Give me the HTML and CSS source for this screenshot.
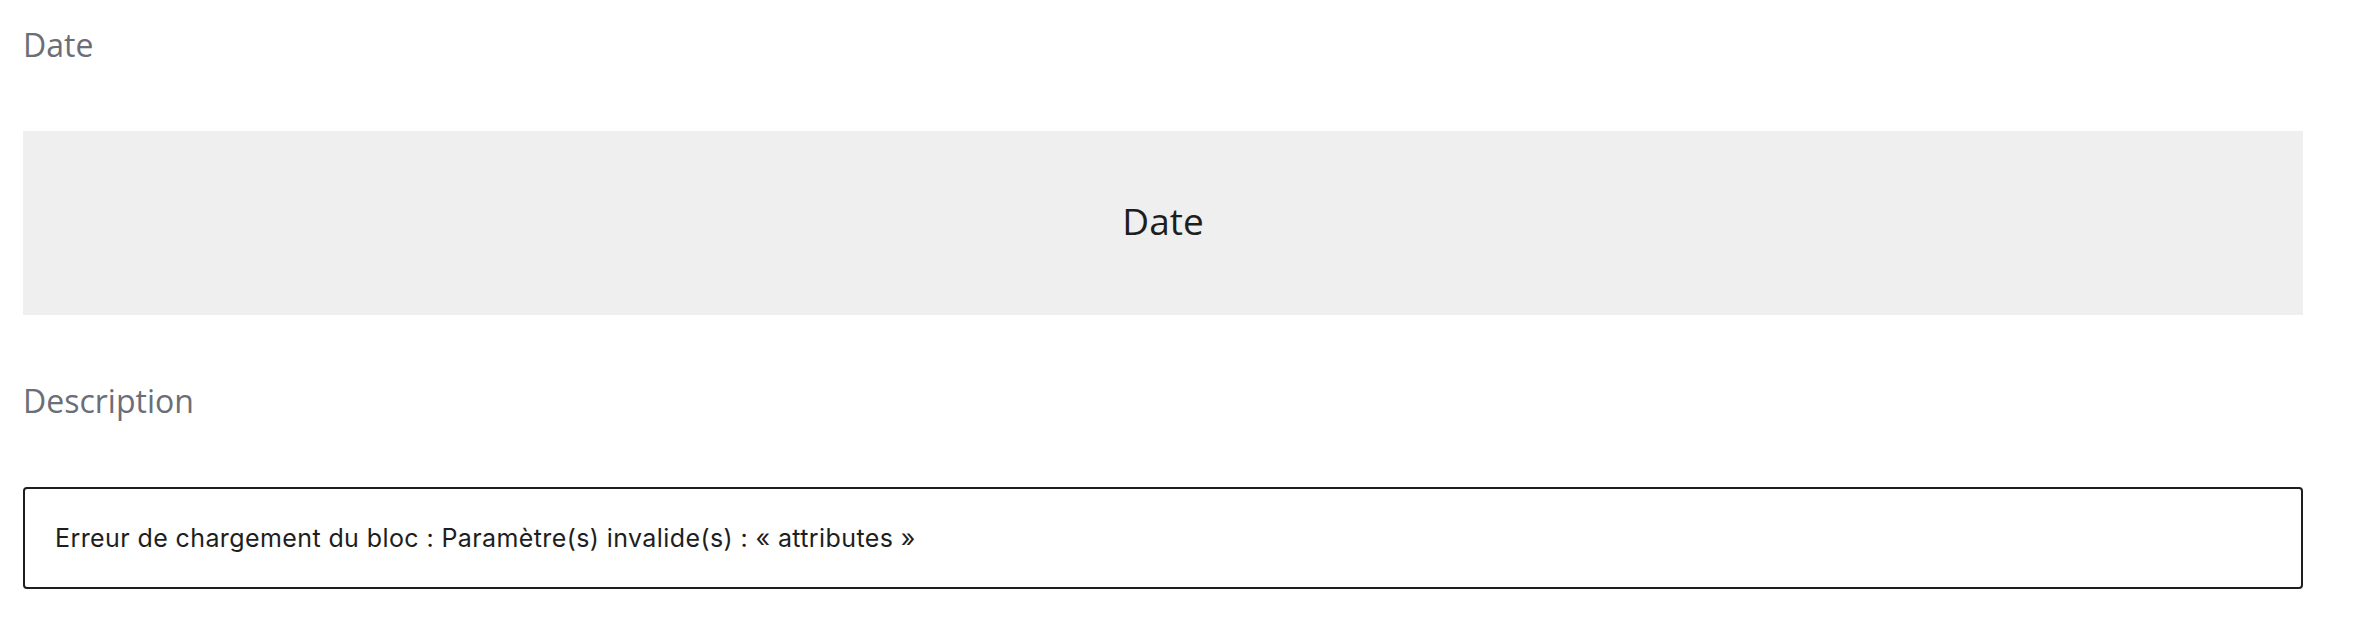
FILE: index.html
```html
<!DOCTYPE html>
<html lang="fr">
<head>
  <meta charset="UTF-8">
  <meta name="viewport" content="width=device-width, initial-scale=1.0">
  <title>Date et description</title>
  <link rel="stylesheet" href="styles.css">
</head>
<body>

  <!-- Champ Date -->
  <section class="field">
    <h2 class="field-label">Date</h2>
    <div class="date-placeholder">Date</div>
  </section>

  <!-- Champ Description -->
  <section class="field">
    <h2 class="field-label">Description</h2>
    <div class="block-error">
      Erreur de chargement du bloc : Paramètre(s) invalide(s) : « attributes »
    </div>
  </section>

</body>
</html>
```

FILE: styles.css
```css
/* Global Styles */
body {
  font-family: "Open Sans", "Noto Sans", sans-serif;
  margin: 0;
  padding: 22px 67px 0 23px;
  background-color: #ffffff;
}

.field {
  margin-bottom: 63px;
}

.field-label {
  margin: 0 0 64px 0;
  font-size: 32px;
  line-height: 45px;
  font-weight: 400;
  color: #6b6e76;
}

/* Grey date box */
.date-placeholder {
  box-sizing: border-box;
  height: 184px;
  padding-bottom: 5px;
  background-color: #efefef;
  display: flex;
  align-items: center;
  justify-content: center;
  font-size: 37px;
  color: #1e1e1e;
}

/* Error notice */
.block-error {
  height: 98px;
  border: 2px solid #1e1e1e;
  border-radius: 4px;
  padding: 0 30px;
  display: flex;
  align-items: center;
  font-family: Inter, "Liberation Sans", sans-serif;
  font-size: 25px;
  letter-spacing: 0.4px;
  color: #1e1e1e;
}
```
